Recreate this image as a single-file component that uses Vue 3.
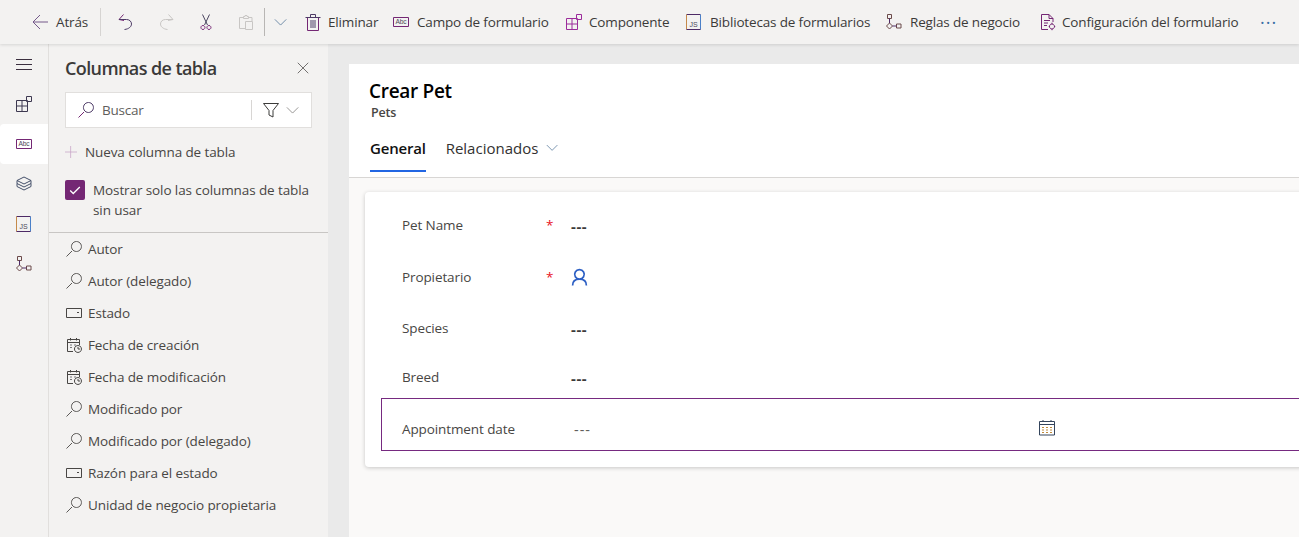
<script setup>
import { h } from 'vue'

const P = '#742774'
const D = '#484644'
const G = '#c8c6c4'

const shapes = {
  back: [['M16 8H1M8 1 1 8 8 15', '#74598a']],
  undo: [['M5.5 .5 1 5.5 6 6.5', P], ['M1 5.5H8.5C11.5 5.5 13.5 7.5 13.5 10C13.5 12.5 11 15 6.5 15.5', '#4d3a66']],
  redo: [['M10.5 .5 15 5.5 10 6.5M15 5.5H7.5C4.5 5.5 2.5 7.5 2.5 10C2.5 12.5 5 15 9.5 15.5', G]],
  cut: [['M4.5 .5 9.5 11M11.5 .5 6.5 11', '#4a4560'], ['M5 11.5a2 2 0 1 1-.1 0ZM11 11.5a2 2 0 1 1-.1 0Z', P]],
  paste: [['M5.5 3.5H1.5V14.5H7.5M10.5 3.5H14V7M5.5 4.5V2.5H7V1.5H9V2.5H10.5V4.5ZM7.5 7.5H14.5V15.5H7.5Z', G]],
  trash: [['M2.5 3.5V16.5H13.5V3.5Z', P], ['M.5 3.5H15.5M5.5 3.5V.5H10.5V3.5M6 6V14M8 6V14M10 6V14', '#4d3a66']],
  abc: [['M.5 3.5H15.5V12.5H.5Z', P]],
  comp: [['M.5 4.5H11.5V15.5H.5ZM.5 10H11.5M6 4.5V15.5', '#9b2b9b'], ['M10.5 .5H15.5V5.5H10.5Z', '#9b2b9b']],
  compD: [['M.5 4.5H11.5V15.5H.5ZM.5 10H11.5M6 4.5V15.5', '#3d3850'], ['M10.5 .5H15.5V5.5H10.5Z', '#3d3850']],
  js: [['M.5 .5H14.5', '#4d2a66'], ['M.5 .5V15.5', '#c58a4a'], ['M14.5 .5V15.5', '#4a80c8'], ['M.5 15.5H14.5', '#4d2a66']],
  rules: [['M1.5 .5H5.5V4.5H1.5ZM.5 12 3.5 9 6.5 12 3.5 15ZM10.5 10H15V14H10.5Z', '#6b4a4a'], ['M3.5 4.5V9M6.5 12H10.5', '#4d2a66']],
  config: [['M10 .5H2.5V15.5H9M10 .5 14 4.5V8M10 .5V4.5H14', P], ['M5 6.5H11M5 9H9M5 11.5H8', P], ['M13 10a2.5 2.5 0 1 1-.1 0ZM13 8.7V10M13 15V16.2M9.8 12.5H11M15 12.5H16.2', P]],
  hamb: [['M0 3.5H16M0 8.5H16M0 13.5H16', '#3b2f3f']],
  layers: [['M8 1 15 4.5 8 8 1 4.5ZM1 4.5V7.5L8 11 15 7.5V4.5M1 7.5V10.5L8 14 15 10.5V7.5', '#44506a']],
  glass: [['M6 10 .5 15.5', '#5a5856'], ['M10.5 .5a5 5 0 1 1-.1 0Z', '#5a5856']],
  glassP: [['M6 10 .5 15.5', P], ['M10.5 .5a5 5 0 1 1-.1 0Z', '#4d3a66']],
  filter: [['M.5 1.5H15.5L10 8.5V15L6 13V8.5Z', '#3b3a39']],
  chev: [['M1 5 7.5 11.5 14 5', '#8a8886']],
  chevB: [['M1 5 7.5 11.5 14 5', '#5f7f9f']],
  x: [['M1 1 15 15M15 1 1 15', '#484644']],
  plus: [['M7.5 0V16M0 8H16', '#c7a3c7']],
  check: [['M2.5 8.5 6 12 13.5 4.5', '#fff']],
  drop: [['M.5 3.5H15.5V12.5H.5Z', D], ['M11 7.5H13', D]],
  dated: [['M1.5 2.5H13.5V8M1.5 2.5V14.5H7M1.5 5.5H13.5M4.5 1V3.5M10.5 1V3.5', D], ['M4 8H6M4 10.5H6M8 8H10', '#77767a'], ['M12 8.5a3.5 3.5 0 1 1-.1 0ZM12 10V12H14', D]],
  person: [['M8 1.5a4.5 4.5 0 1 1-.1 0ZM1.5 16.5C1.5 12.5 4 10.5 8 10.5C12 10.5 14.5 12.5 14.5 16.5', '#2c5fc4']],
  cal: [['M.5 1.5H15.5V15H.5Z', '#34445c'], ['M.5 4.5H15.5M4 0V2M12 0V2', '#34445c'], ['M3 7.5H5M7 7.5H9M11 7.5H13M3 10H5M7 10H9M11 10H13M3 12.5H5M7 12.5H9M11 12.5H13', '#c08a3a']],
}

const Ico = (props) => h('svg', {
  width: props.size || 16, height: props.size || 16, viewBox: '0 0 16 16', fill: 'none', style: 'flex:none;display:block;overflow:visible',
}, [
  ...shapes[props.name].map(([d, c]) => h('path', { d, stroke: c, 'stroke-width': props.name === 'person' ? 1.6 : (props.name === 'check' ? 1.5 : 1) })),
  ...(props.name === 'abc' ? [h('text', { x: 8, y: 10.4, 'font-size': 6.6, 'text-anchor': 'middle', fill: '#4d4a5a', 'font-family': 'Liberation Sans, sans-serif' }, 'Abc')] : []),
  ...(props.name === 'js' ? [h('text', { x: 7.5, y: 12.6, 'font-size': 7, 'text-anchor': 'middle', fill: '#4d4a5a', 'font-family': 'Liberation Sans, sans-serif' }, 'JS')] : []),
])
Ico.props = ['name', 'size']

const actions = [
  { icon: 'trash', label: 'Eliminar', w: 88, gap: 7 },
  { icon: 'abc', label: 'Campo de formulario', w: 173, gap: 8 },
  { icon: 'comp', label: 'Componente', w: 120, gap: 7 },
  { icon: 'js', label: 'Bibliotecas de formularios', w: 200, gap: 8 },
  { icon: 'rules', label: 'Reglas de negocio', w: 153, gap: 8 },
  { icon: 'config', label: 'Configuración del formulario', w: 221, gap: 7 },
]
const rail = ['hamb', 'compD', 'abc', 'layers', 'js', 'rules']
const columns = [
  { icon: 'glass', label: 'Autor' },
  { icon: 'glass', label: 'Autor (delegado)' },
  { icon: 'drop', label: 'Estado' },
  { icon: 'dated', label: 'Fecha de creación' },
  { icon: 'dated', label: 'Fecha de modificación' },
  { icon: 'glass', label: 'Modificado por' },
  { icon: 'glass', label: 'Modificado por (delegado)' },
  { icon: 'drop', label: 'Razón para el estado' },
  { icon: 'glass', label: 'Unidad de negocio propietaria' },
]
</script>

<template>
  <div class="app">
    <header class="toolbar">
      <div class="tool back"><Ico name="back" /><span>Atrás</span></div>
      <i class="sep"></i>
      <div class="slot first"><Ico name="undo" /></div>
      <div class="slot"><Ico name="redo" /></div>
      <div class="slot"><Ico name="cut" /></div>
      <div class="slot"><Ico name="paste" /></div>
      <i class="sep sep2"></i>
      <div class="more"><Ico name="chevB" :size="14" /></div>
      <div v-for="a in actions" :key="a.label" class="tool" :style="{ width: a.w + 'px', gap: a.gap + 'px' }">
        <Ico :name="a.icon" /><span>{{ a.label }}</span>
      </div>
      <div class="dots">···</div>
    </header>

    <div class="body">
      <nav class="rail">
        <div v-for="(r, i) in rail" :key="i" class="rail-item" :class="{ on: i === 2 }"><Ico :name="r" /></div>
      </nav>

      <aside class="panel">
        <div class="panel-head">
          <h2>Columnas de tabla</h2>
          <Ico name="x" :size="12" />
        </div>
        <div class="search">
          <Ico name="glassP" />
          <span class="ph">Buscar</span>
          <i class="search-sep"></i>
          <Ico name="filter" />
          <Ico name="chev" :size="14" />
        </div>
        <div class="new"><Ico name="plus" :size="12" /><span>Nueva columna de tabla</span></div>
        <div class="only">
          <span class="box"><Ico name="check" :size="14" /></span>
          <span>Mostrar solo las columnas de tabla sin usar</span>
        </div>
        <ul class="cols">
          <li v-for="c in columns" :key="c.label"><Ico :name="c.icon" /><span>{{ c.label }}</span></li>
        </ul>
      </aside>

      <main class="main">
        <section class="head">
          <h1>Crear Pet</h1>
          <p>Pets</p>
          <div class="tabs">
            <span class="tab active">General</span>
            <span class="tab">Relacionados</span>
            <Ico name="chevB" :size="13" />
          </div>
        </section>
        <section class="canvas">
          <div class="card">
            <div class="row r1"><label>Pet Name</label><b class="req">*</b><span class="val">---</span></div>
            <div class="row r2"><label>Propietario</label><b class="req">*</b><Ico name="person" :size="17" /></div>
            <div class="row r3"><label>Species</label><span class="val">---</span></div>
            <div class="row r4"><label>Breed</label><span class="val">---</span></div>
            <div class="row picked"><label>Appointment date</label><span class="val light">---</span><Ico name="cal" /></div>
          </div>
        </section>
      </main>
    </div>
  </div>
</template>

<style scoped>
.app {
  width: 1299px;
  height: 537px;
  overflow: hidden;
  display: flex;
  flex-direction: column;
  font-family: "Open Sans", "Noto Sans", sans-serif;
  font-size: 13.5px;
  color: #484644;
  background: #f3f2f1;
  letter-spacing: -.1px;
}
.toolbar {
  flex: none;
  height: 44px;
  display: flex;
  align-items: center;
  padding-left: 32px;
  background: #f3f2f1;
  box-shadow: 0 1px 3px rgba(0, 0, 0, .12);
  position: relative;
  z-index: 2;
  color: #3b3a39;
  letter-spacing: -.16px;
}
.tool { display: flex; align-items: center; gap: 8px; flex: none; white-space: nowrap; }
.back { width: 68px; }
.sep { width: 1px; height: 28px; background: #d6d4d2; flex: none; }
.slot { width: 40px; flex: none; }
.slot.first { margin-left: 17px; }
.sep2 { margin-left: -14px; background: #b8b6b4; }
.more { width: 40px; padding-left: 9px; box-sizing: border-box; flex: none; }
.dots { color: #3a6ea5; font-size: 18px; letter-spacing: 1px; }

.body { flex: 1; display: flex; min-height: 0; }
.rail { width: 48px; flex: none; border-right: 1px solid #e1dfdd; }
.rail-item { height: 40px; display: flex; align-items: center; justify-content: center; }
.rail-item.on { background: #fff; border-radius: 4px 0 0 4px; }

.panel { width: 279px; flex: none; display: flex; flex-direction: column; }
.panel-head {
  height: 48px;
  padding: 0 19px 0 16px;
  display: flex;
  align-items: center;
  justify-content: space-between;
}
.panel-head h2 { margin: 0; font-size: 18px; font-weight: 600; color: #3b3a39; letter-spacing: -.6px; }
.search {
  margin-left: 16px;
  width: 247px;
  height: 36px;
  box-sizing: border-box;
  background: #fff;
  border: 1px solid #e1dfdd;
  display: flex;
  align-items: center;
  padding: 0 11px 0 12px;
}
.ph { margin-left: 8px; width: 149px; letter-spacing: -.25px; color: #605e5c; }
.search-sep { width: 1px; height: 20px; background: #d8d6d4; margin-right: 11px; }
.search svg:last-child { margin-left: 7px; }
.new {
  margin: 15px 0 0 16px;
  height: 18px;
  display: flex;
  align-items: center;
  gap: 8px;
}
.only {
  margin: 19px 16px 0 16px;
  display: flex;
  gap: 8px;
  line-height: 20px;
}
.box {
  width: 20px;
  height: 20px;
  flex: none;
  background: #742774;
  border-radius: 2px;
  display: flex;
  align-items: center;
  justify-content: center;
}
.cols {
  list-style: none;
  margin: 12px 0 0;
  padding: 0;
  border-top: 1px solid #c8c6c4;
}
.cols li {
  height: 32px;
  display: flex;
  align-items: center;
  gap: 6px;
  padding-left: 17px;
}

.main { flex: 1; min-width: 0; background: #eaeaea; padding: 20px 0 0 21px; display: flex; flex-direction: column; }
.head { flex: none; height: 114px; box-sizing: border-box; background: #fff; padding: 14px 0 0 20px; border-bottom: 1px solid #d8d6d4; }
.head h1 { margin: 0; font-size: 19px; line-height: 26px; font-weight: 600; color: #000; letter-spacing: -.3px; }
.head p { margin: 1px 0 0 2px; font-size: 12.5px; line-height: 16px; font-weight: 600; color: #484644; letter-spacing: -.2px; }
.tabs { margin-top: 15px; display: flex; align-items: flex-start; font-size: 15px; color: #323130; letter-spacing: 0; }
.tab { height: 36px; line-height: 24px; box-sizing: border-box; }
.tab.active { font-weight: 600; color: #111; border-bottom: 2px solid #2266e3; margin-left: 1px; margin-right: 20px; letter-spacing: -.2px; }
.tab + .tab { margin-right: 8px; }
.tabs svg { margin-top: 5px; }
.canvas { flex: 1; background: #faf9f8; padding: 14px 0 0 16px; }
.card {
  margin-right: -20px;
  height: 275px;
  box-sizing: border-box;
  padding: 8px 0 0 16px;
  background: #fff;
  border-radius: 4px;
  box-shadow: 0 1px 4px rgba(0, 0, 0, .2);
}
.row { display: flex; align-items: flex-start; padding-left: 21px; box-sizing: border-box; }
.row label { width: 144px; flex: none; color: #484644; }
.r1 { height: 52px; padding-top: 16px; }
.r2 { height: 51px; padding-top: 16px; }
.r3 { height: 50px; padding-top: 16px; }
.r4 { height: 45px; padding-top: 15px; }
.req { color: #e81123; width: 25px; flex: none; font-weight: 400; }
.r3 label, .r4 label { width: 169px; }
.val { font-weight: 700; font-size: 15px; color: #3b3a39; padding-top: 0; letter-spacing: .6px; }
.picked {
  height: 53px;
  padding: 21px 0 0 20px;
  border: 1px solid #762a80;
  border-right: 0;
}
.picked label { width: 172px; }
.val.light { font-weight: 400; font-size: 14.5px; color: #605e5c; width: 465px; flex: none; letter-spacing: 1px; }
</style>
